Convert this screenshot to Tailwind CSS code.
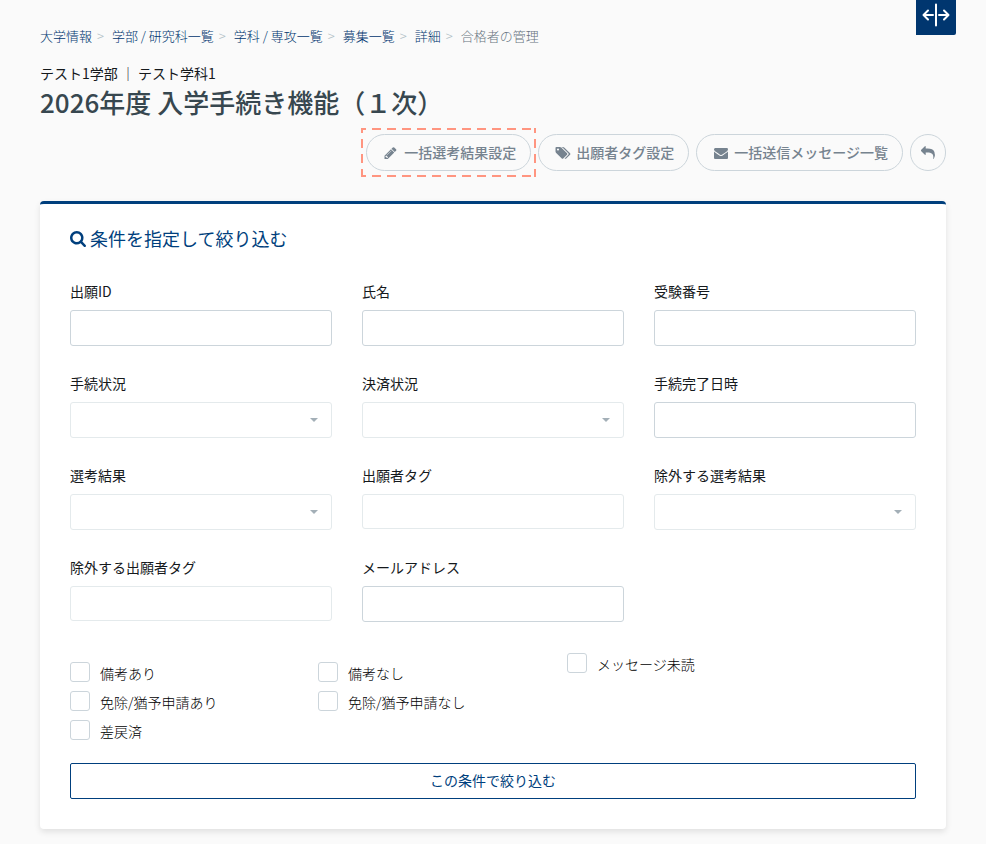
<!DOCTYPE html>
<html lang="ja">
<head>
    <meta charset="UTF-8">
    <meta name="viewport" content="width=device-width, initial-scale=1.0">
    <title>合格者の管理</title>
    <script src="https://cdn.jsdelivr.net/npm/@tailwindcss/browser@4"></script>
</head>
<body class="min-h-screen bg-[#fafafa] font-['Noto_Sans_CJK_JP',sans-serif] text-sm text-[#15191c]">
    <!-- Width toggle -->
    <button type="button" aria-label="表示幅の切り替え" class="absolute top-0 right-[30px] flex h-[35px] w-10 justify-center rounded-br-xs bg-[#00366f] text-white">
        <svg class="h-[30px] w-7" viewBox="0 0 28 30" fill="none" stroke="currentColor" stroke-width="2">
            <path d="M14 4.500v21M11 15H2M6 10.500L1.500 15L6 19.500M17 15h9M22 10.500l4.500 4.500l-4.500 4.500" stroke-linecap="round" stroke-linejoin="round"/>
        </svg>
    </button>

    <!-- Page header -->
    <header class="px-10 pt-[26px]">
        <nav aria-label="パンくずリスト">
            <ol class="flex text-[13px] leading-5 font-light text-[#00366f]">
                <li><a href="#">大学情報</a><span class="px-[5px] text-[#b0bec5]">&gt;</span></li>
                <li class="pl-[3px]"><a href="#">学部 / 研究科一覧</a><span class="px-[5px] text-[#b0bec5]">&gt;</span></li>
                <li class="pl-[3px]"><a href="#">学科 / 専攻一覧</a><span class="px-[5px] text-[#b0bec5]">&gt;</span></li>
                <li class="pl-[3px]"><a href="#">募集一覧</a><span class="px-[5px] text-[#b0bec5]">&gt;</span></li>
                <li class="pl-[3px]"><a href="#">詳細</a><span class="px-[5px] text-[#b0bec5]">&gt;</span></li>
                <li class="pl-[3px] text-[#67747f]">合格者の管理</li>
            </ol>
        </nav>
        <p class="mt-4 leading-[22px]">テスト1学部 ｜ テスト学科1</p>
        <h1 class="text-[26px] leading-9 font-medium text-[#37474f]">2026年度 入学手続き機能（１次）</h1>

        <div class="mt-[14px] flex justify-end gap-[7px] font-medium text-[#76838f]">
            <div class="relative">
                <button type="button" class="flex h-[37px] items-center gap-[5px] rounded-full border border-[#ccd5db] pr-[14px] pb-[2px] pl-[15px]">
                    <svg class="mt-[2px] h-[14px] w-[17px]" viewBox="0 0 1792 1792" fill="currentColor"><path d="M491 1536l91-91-235-235-91 91v107h128v128h107zm523-928q0-22-22-22-10 0-17 7l-542 542q-7 7-7 17 0 22 22 22 10 0 17-7l542-542q7-7 7-17zm-54-192l416 416-832 832h-416v-416zm683 96q0 53-37 90l-166 166-416-416 166-165q36-38 90-38 53 0 91 38l235 234q37 39 37 91z"/></svg>
                    一括選考結果設定
                </button>
                <!-- Highlight frame -->
                <svg class="pointer-events-none absolute -inset-x-[5px] -inset-y-[6px] h-[49px] w-[calc(100%+10px)]" fill="none">
                    <path d="M0 1H175" stroke="#ff9580" stroke-width="2" stroke-dasharray="9 6" stroke-dashoffset="4"/>
                    <path d="M0 48H175" stroke="#ff9580" stroke-width="2" stroke-dasharray="9 6" stroke-dashoffset="4"/>
                    <path d="M1 0V49" stroke="#ff9580" stroke-width="2" stroke-dasharray="9 6" stroke-dashoffset="4"/>
                    <svg x="100%" overflow="visible"><path d="M-1 0V49" stroke="#ff9580" stroke-width="2" stroke-dasharray="9 6" stroke-dashoffset="4"/></svg>
                </svg>
            </div>
            <button type="button" class="flex h-[37px] items-center gap-1 rounded-full border border-[#ccd5db] pr-[14px] pb-[2px] pl-[15px]">
                <svg class="mt-[2px] h-[14px] w-[18px]" viewBox="0 0 1920 1792" fill="currentColor"><path d="M448 448q0-53-37.500-90.500t-90.500-37.500-90.500 37.500-37.500 90.500 37.500 90.500 90.500 37.500 90.500-37.500 37.500-90.500zm1067 576q0 53-37 90l-491 492q-39 37-91 37-53 0-90-37l-715-716q-38-37-64.500-101t-26.500-117v-416q0-52 38-90t90-38h416q53 0 117 26.500t102 64.500l715 714q37 39 37 91zm384 0q0 53-37 90l-491 492q-39 37-91 37-36 0-59-14t-53-45l470-470q37-37 37-90 0-52-37-91l-715-714q-38-38-102-64.500t-117-26.500h224q53 0 117 26.500t102 64.500l715 714q37 39 37 91z"/></svg>
                出願者タグ設定
            </button>
            <button type="button" class="flex h-[37px] items-center gap-1 rounded-full border border-[#ccd5db] pr-[14px] pb-[2px] pl-[15px]">
                <svg class="mt-[2px] h-[14px] w-[18px]" viewBox="0 0 1792 1792" fill="currentColor"><path d="M1792 710v794q0 66-47 113t-113 47h-1472q-66 0-113-47t-47-113v-794q44 49 101 87 362 246 497 345 57 42 92.500 65.500t94.500 48 110 24.500h2q51 0 110-24.500t94.500-48 92.500-65.500q170-123 498-345 57-39 100-87zm0-294q0 79-49 151t-122 123q-376 261-468 325-10 7-42.500 31t-54 38.500-52 32.500-57.500 27-50 9h-2q-23 0-50-9t-57.500-27-52-32.500-54-38.500-42.500-31q-91-64-262-182.500t-205-142.500q-62-42-117-115.500t-55-136.500q0-78 41.500-130t118.500-52h1472q65 0 112.500 47t47.500 113z"/></svg>
                一括送信メッセージ一覧
            </button>
            <button type="button" aria-label="戻る" class="flex h-[37px] w-9 items-center justify-center rounded-full border border-[#ccd5db]">
                <svg class="size-[14px]" viewBox="0 0 1792 1792" fill="currentColor"><path d="M1792 1120q0 166-127 451-3 7-10.500 24t-13.500 30-13 22q-12 17-28 17-15 0-23.500-10t-8.500-25q0-9 2.500-26.500t2.500-23.500q5-68 5-123 0-112-19.500-200.500t-54-153.500-89-112-118-77.500-142-47.500-158.500-24-171-7h-224v256q0 26-19 45t-45 19-45-19l-512-512q-19-19-19-45t19-45l512-512q19-19 45-19t45 19 19 45v256h224q713 0 875 403 53 134 53 333z"/></svg>
            </button>
        </div>
    </header>

    <!-- Search panel -->
    <main class="px-10 pt-[30px] pb-[15px]">
        <form class="rounded border-t-3 border-[#003f7d] bg-white px-[30px] pt-5 pb-[30px] shadow-[0_3px_6px_rgba(0,0,0,0.1)]">
            <h2 class="flex items-center gap-1 text-lg leading-7 text-[#003f7d]">
                <svg class="mt-[2px] size-4" viewBox="64 128 1664 1664" fill="currentColor"><path d="M1216 832q0-185-131.500-316.500t-316.500-131.500-316.500 131.500-131.500 316.500 131.500 316.500 316.500 131.500 316.500-131.500 131.500-316.500zm512 832q0 52-38 90t-90 38q-54 0-90-38l-343-342q-179 124-399 124-143 0-273.500-55.500t-225-150-150-225-55.500-273.500 55.500-273.500 150-225 225-150 273.500-55.500 273.500 55.500 225 150 150 225 55.500 273.500q0 220-124 399l343 343q37 37 37 90z"/></svg>
                条件を指定して絞り込む
            </h2>

            <div class="mt-7 grid grid-cols-3 gap-x-[30px] gap-y-[26px]">
                <div>
                    <label for="entryId" class="mb-2 block leading-[22px]">出願ID</label>
                    <input id="entryId" type="text" class="block h-9 w-full rounded-[3px] border border-[#ccd5db] px-3">
                </div>
                <div>
                    <label for="name" class="mb-2 block leading-[22px]">氏名</label>
                    <input id="name" type="text" class="block h-9 w-full rounded-[3px] border border-[#ccd5db] px-3">
                </div>
                <div>
                    <label for="examNo" class="mb-2 block leading-[22px]">受験番号</label>
                    <input id="examNo" type="text" class="block h-9 w-full rounded-[3px] border border-[#ccd5db] px-3">
                </div>
                <div>
                    <label for="procedure" class="mb-2 block leading-[22px]">手続状況</label>
                    <div class="relative">
                        <select id="procedure" class="block h-9 w-full appearance-none rounded-[3px] border border-[#e4eaec] px-3"><option></option></select>
                        <svg class="pointer-events-none absolute top-4 right-[14px] h-1 w-2" viewBox="0 0 8 4" fill="#a3afb7"><path d="M0 0h8L4 4z"/></svg>
                    </div>
                </div>
                <div>
                    <label for="payment" class="mb-2 block leading-[22px]">決済状況</label>
                    <div class="relative">
                        <select id="payment" class="block h-9 w-full appearance-none rounded-[3px] border border-[#e4eaec] px-3"><option></option></select>
                        <svg class="pointer-events-none absolute top-4 right-[14px] h-1 w-2" viewBox="0 0 8 4" fill="#a3afb7"><path d="M0 0h8L4 4z"/></svg>
                    </div>
                </div>
                <div>
                    <label for="completedAt" class="mb-2 block leading-[22px]">手続完了日時</label>
                    <input id="completedAt" type="text" class="block h-9 w-full rounded-[3px] border border-[#ccd5db] px-3">
                </div>
                <div>
                    <label for="result" class="mb-2 block leading-[22px]">選考結果</label>
                    <div class="relative">
                        <select id="result" class="block h-9 w-full appearance-none rounded-[3px] border border-[#e4eaec] px-3"><option></option></select>
                        <svg class="pointer-events-none absolute top-4 right-[14px] h-1 w-2" viewBox="0 0 8 4" fill="#a3afb7"><path d="M0 0h8L4 4z"/></svg>
                    </div>
                </div>
                <div>
                    <label for="tags" class="mb-2 block leading-[22px]">出願者タグ</label>
                    <input id="tags" type="text" class="block h-[35px] w-full rounded-[3px] border border-[#e4eaec] px-3">
                </div>
                <div>
                    <label for="excludeResult" class="mb-2 block leading-[22px]">除外する選考結果</label>
                    <div class="relative">
                        <select id="excludeResult" class="block h-9 w-full appearance-none rounded-[3px] border border-[#e4eaec] px-3"><option></option></select>
                        <svg class="pointer-events-none absolute top-4 right-[14px] h-1 w-2" viewBox="0 0 8 4" fill="#a3afb7"><path d="M0 0h8L4 4z"/></svg>
                    </div>
                </div>
                <div>
                    <label for="excludeTags" class="mb-2 block leading-[22px]">除外する出願者タグ</label>
                    <input id="excludeTags" type="text" class="block h-[35px] w-full rounded-[3px] border border-[#e4eaec] px-3">
                </div>
                <div>
                    <label for="email" class="mb-2 block leading-[22px]">メールアドレス</label>
                    <input id="email" type="email" class="block h-9 w-full rounded-[3px] border border-[#ccd5db] px-3">
                </div>
            </div>

            <!-- Checkboxes -->
            <div class="mt-[31px] flex font-light text-black">
                <div class="mt-[9px] flex w-[248px] flex-col gap-[7px]">
                    <label class="flex h-[22px] gap-[10px] leading-[22px]"><input type="checkbox" class="size-5 shrink-0 appearance-none rounded-[3px] border border-[#ccd5db] bg-white checked:bg-[#003f7d]">備考あり</label>
                    <label class="flex h-[22px] gap-[10px] leading-[22px]"><input type="checkbox" class="size-5 shrink-0 appearance-none rounded-[3px] border border-[#ccd5db] bg-white checked:bg-[#003f7d]">免除/猶予申請あり</label>
                    <label class="flex h-[22px] gap-[10px] leading-[22px]"><input type="checkbox" class="size-5 shrink-0 appearance-none rounded-[3px] border border-[#ccd5db] bg-white checked:bg-[#003f7d]">差戻済</label>
                </div>
                <div class="mt-[9px] flex w-[249px] flex-col gap-[7px]">
                    <label class="flex h-[22px] gap-[10px] leading-[22px]"><input type="checkbox" class="size-5 shrink-0 appearance-none rounded-[3px] border border-[#ccd5db] bg-white checked:bg-[#003f7d]">備考なし</label>
                    <label class="flex h-[22px] gap-[10px] leading-[22px]"><input type="checkbox" class="size-5 shrink-0 appearance-none rounded-[3px] border border-[#ccd5db] bg-white checked:bg-[#003f7d]">免除/猶予申請なし</label>
                </div>
                <div>
                    <label class="flex h-[22px] gap-[10px] leading-[22px]"><input type="checkbox" class="size-5 shrink-0 appearance-none rounded-[3px] border border-[#ccd5db] bg-white checked:bg-[#003f7d]">メッセージ未読</label>
                </div>
            </div>

            <button type="submit" class="mt-[21px] block h-9 w-full rounded-xs border border-[#003f7d] pb-[2px] text-[#003f7d]">この条件で絞り込む</button>
        </form>
    </main>
</body>
</html>
